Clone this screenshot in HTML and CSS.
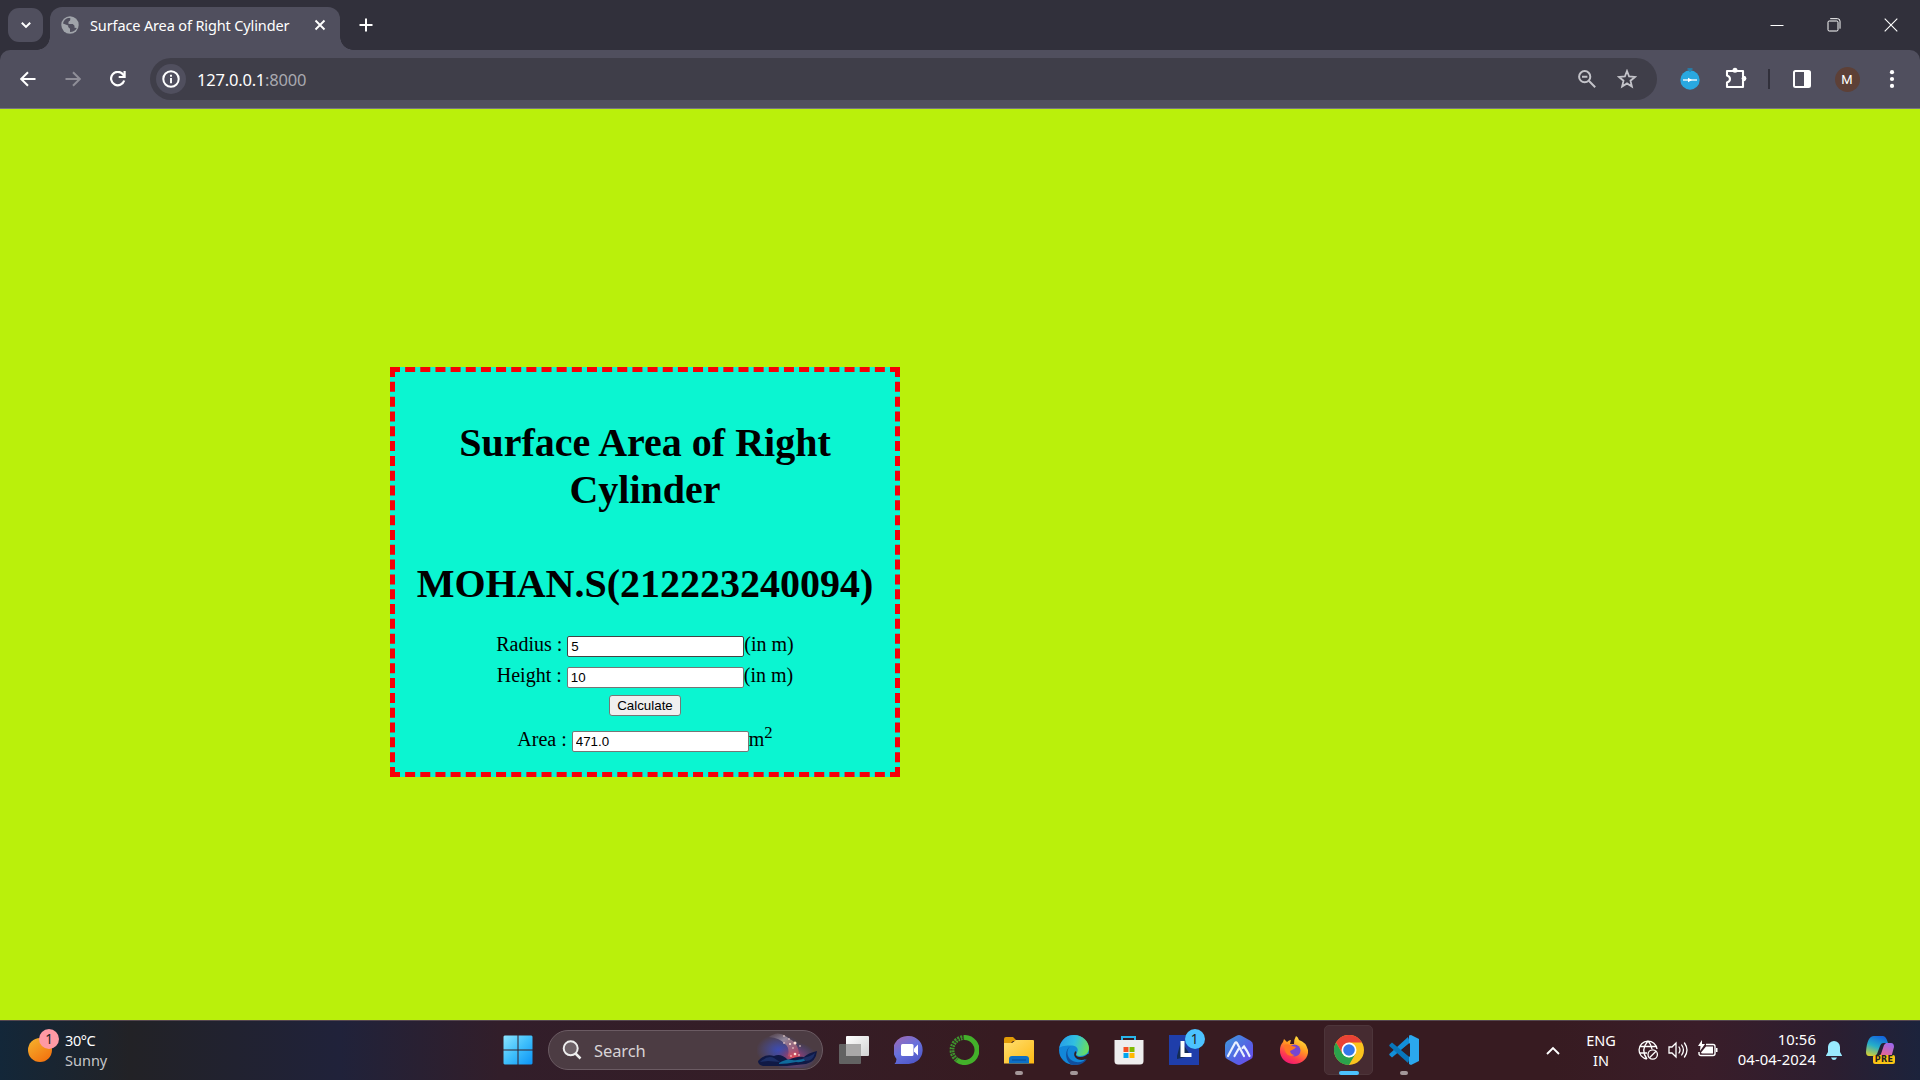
FILE: index.html
```html
<!DOCTYPE html>
<html lang="en">
<head>
<meta charset="utf-8">
<title>Surface Area of Right Cylinder</title>
<link rel="stylesheet" href="styles.css">
</head>
<body>
<div class="screen">
  <header class="tabstrip">
    <button class="tab-search" aria-label="Search tabs"><svg width="12" height="12" viewBox="0 0 12 12"><path d="M1.8 3.7 6 7.9l4.200-4.200" fill="none" stroke="#fff" stroke-width="2"/></svg></button>
    <div class="tab">
      <svg class="favicon" width="18" height="18" viewBox="0 0 18 18"><circle cx="9" cy="9" r="8.700" fill="#a0a4aa"/><path d="M2 7.500C2.300 5 4.500 2.500 7 2L9.500 2v2.200L7.500 6v2h4.300l1.700 1.700v2.100l2.300.2C14.500 14.500 12 16 9 16v-3.200L7.200 11V9.400z" fill="#504f5e"/><path d="M7.500 6 9.500 4.200V2l3 1 2.500 3-3.200 1.500H9z" fill="#a0a4aa"/></svg>
      <span class="tab-title">Surface Area of Right Cylinder</span>
      <svg class="tab-close" width="12" height="12" viewBox="0 0 12 12"><path d="m1.500 1.500 9 9m0-9-9 9" stroke="#fff" stroke-width="1.900"/></svg>
    </div>
    <svg class="new-tab" width="14" height="14" viewBox="0 0 14 14"><path d="M7 .5v13M.5 7h13" stroke="#fff" stroke-width="2"/></svg>
    <div class="window-controls">
      <svg width="14" height="14" viewBox="0 0 14 14"><path d="M.5 7.500h13" stroke="#fff"/></svg>
      <svg width="14" height="14" viewBox="0 0 14 14"><rect x="1" y="3" width="10" height="10" rx="1.200" fill="none" stroke="#fff"/><path d="M3.200.7h7.300a2.500 2.500 0 0 1 2.500 2.500v7.500" fill="none" stroke="#fff"/></svg>
      <svg width="14" height="14" viewBox="0 0 14 14"><path d="m.7.7 12.600 12.600m0-12.600L.7 13.300" stroke="#fff" stroke-width="1.100"/></svg>
    </div>
  </header>
  <div class="toolbar-back">
  <nav class="toolbar">
    <div class="nav-icons">
      <svg width="16" height="16" viewBox="0 0 16 16"><path d="M15.500 8H2M8 1.200 1.200 8 8 14.800" fill="none" stroke="#fff" stroke-width="2"/></svg>
      <svg width="16" height="16" viewBox="0 0 16 16"><path d="M.5 8H14M8 1.200 14.800 8 8 14.800" fill="none" stroke="#8f8e98" stroke-width="2"/></svg>
      <svg width="16" height="16" viewBox="0 0 16 16"><path d="M14.200 9.500A6.700 6.700 0 1 1 12.900 3.200L14.300 5" fill="none" stroke="#fff" stroke-width="2.200"/><path d="M15.700 0v7h-7V5h4.800V0z" fill="#fff"/></svg>
    </div>
    <div class="omnibox">
      <span class="site-info"><svg width="18" height="18" viewBox="0 0 18 18"><circle cx="9" cy="9" r="7.700" fill="none" stroke="#fff" stroke-width="2"/><path d="M9 8v5.200M9 4.800v2" stroke="#fff" stroke-width="1.900"/></svg></span>
      <span class="url">127.0.0.1<span class="port">:8000</span></span>
      <svg class="zoom-icon" width="18" height="18" viewBox="0 0 18 18"><circle cx="6.700" cy="6.700" r="5.600" fill="none" stroke="#c3c3c9" stroke-width="2"/><path d="m10.800 10.800 6.400 6.400M4 6.700h5.400" stroke="#c3c3c9" stroke-width="2"/></svg>
      <svg class="star-icon" width="20" height="20" viewBox="0 0 20 20"><path d="m10 2 2.100 5.500 5.900.4-4.500 3.800 1.400 5.800L10 14.400l-4.900 3.100 1.400-5.800L2 7.900l5.900-.4z" fill="none" stroke="#c3c3c9" stroke-width="1.800"/></svg>
    </div>
    <div class="ext timer"><svg width="20" height="22" viewBox="0 0 20 22"><circle cx="10" cy="12" r="9.700" fill="#29a8e0"/><path d="M7.500 1h5M10 1v3" stroke="#1e86b8" stroke-width="1.500"/><path d="M3 12h14" stroke="#fff" stroke-width="1.300"/><path d="m8 9.800 4 2.200-4 2.200z" fill="#fff"/></svg></div>
    <div class="ext puzzle"><svg width="22" height="22" viewBox="0 0 22 22"><path d="M2 4h16v5.200a2.300 2.300 0 0 1 0 4.400V20H2v-4.500q3-1 3-3.500T2 8.500z" fill="none" stroke="#fff" stroke-width="2.100" stroke-linejoin="round"/><circle cx="10" cy="3.200" r="2.500" fill="#fff"/><circle cx="19" cy="11.500" r="2.400" fill="#fff"/></svg></div>
    <div class="ext divider"><i></i></div>
    <div class="ext panel"><svg width="18" height="18" viewBox="0 0 18 18"><rect x="1" y="1" width="16" height="16" rx="1.500" fill="none" stroke="#fff" stroke-width="2"/><path d="M11 1h6v16h-6z" fill="#fff"/></svg></div>
    <div class="ext profile"><span class="avatar">M</span></div>
    <div class="ext menu"><svg width="6" height="18" viewBox="0 0 6 18"><g fill="#fff"><circle cx="3" cy="2.200" r="2.100"/><circle cx="3" cy="9" r="2.100"/><circle cx="3" cy="15.900" r="2.100"/></g></svg></div>
  </nav>
  </div>
  <main class="page">
    <form class="box">
      <h1>Surface Area of Right Cylinder</h1>
      <h1 class="author">MOHAN.S(212223240094)</h1>
      <div class="row">Radius : <input type="text" class="radius" value="5">(in m)</div>
      <div class="row">Height : <input type="text" value="10">(in m)</div>
      <div class="action"><input type="button" value="Calculate"></div>
      <div class="row area">Area : <input type="text" value="471.0">m<sup>2</sup></div>
    </form>
  </main>
  <footer class="taskbar">
    <div class="weather">
      <span class="sun"><b class="alert">1</b></span>
      <div class="weather-text"><div>30°C</div><div class="cond">Sunny</div></div>
    </div>
    <div class="apps">
      <div class="app"><svg width="30" height="30" viewBox="0 0 30 30"><defs><linearGradient id="win" x1="0" y1="0" x2="1" y2="1"><stop offset="0" stop-color="#8ce4ff"/><stop offset=".5" stop-color="#3fbffb"/><stop offset="1" stop-color="#0c93f5"/></linearGradient></defs><path d="M1.500.5h13v14H.5v-13zM15.500.5h13l1 1v13h-14zM.5 15.500h14v14h-13l-1-1zM15.500 15.500h14v13l-1 1h-13z" fill="url(#win)"/></svg></div>
      <div class="search">
        <svg width="20" height="20" viewBox="0 0 20 20"><circle cx="8.700" cy="8.300" r="7" fill="#6d6167" stroke="#eee" stroke-width="2"/><path d="m13.500 13.500 5 5" stroke="#eee" stroke-width="2.500"/></svg>
        <span>Search</span>
        <svg class="art" width="62" height="36" viewBox="0 0 62 36"><defs><radialGradient id="glow"><stop offset="0" stop-color="#f0484f"/><stop offset=".38" stop-color="#824077" stop-opacity=".85"/><stop offset="1" stop-color="#394ba8" stop-opacity="0"/></radialGradient><radialGradient id="blu"><stop offset="0" stop-color="#394cb9"/><stop offset="1" stop-color="#4b54aa" stop-opacity="0"/></radialGradient><linearGradient id="smk" x1="0" y1="0" x2=".7" y2="1"><stop offset="0" stop-color="#695a68" stop-opacity=".3"/><stop offset=".4" stop-color="#a298a8"/><stop offset="1" stop-color="#d0505f" stop-opacity=".7"/></linearGradient></defs><ellipse cx="22" cy="18" rx="23" ry="16" fill="url(#blu)"/><ellipse cx="37" cy="25" rx="22" ry="15" fill="url(#glow)"/><path d="M12 5Q19-1 27 3q4 3 9 6 5 4 6 12l-5 5-6-2q2-8-3-12Q23 6 12 5" fill="url(#smk)" opacity=".8"/><path d="M1 29q7-8 16-5 7-3 14 4 9-4 16-3 4-4 13-6-1 11-11 13L30 34H6q-5-1-5-5" fill="#101945"/><path d="M22 31q8-5 13-3 9 1 17-3-4 6-13 5-9 2-17 2z" fill="#116b9b"/><path d="M3 30q8-7 14-4l6 4-12-1zM45 26q8-1 13-5-2 8-9 8z" fill="#1d2f66"/><g fill="#ffe1d5"><circle cx="27" cy="4" r=".8"/><circle cx="32" cy="7" r=".8"/><circle cx="27" cy="11" r=".8"/><circle cx="33" cy="12" r="1"/><circle cx="38" cy="11" r="1.500"/><circle cx="43" cy="14" r=".8"/><circle cx="36" cy="16" r=".8"/><circle cx="38" cy="22" r="1.300"/><circle cx="42" cy="23" r=".8"/><circle cx="34" cy="24" r=".8"/></g></svg>
      </div>
      <div class="app"><svg width="30" height="30" viewBox="0 0 30 30"><defs><linearGradient id="tv" x1="0" y1="0" x2="1" y2="1"><stop offset="0" stop-color="#fff"/><stop offset="1" stop-color="#d2d2d2"/></linearGradient></defs><rect x="7" y="1" width="23" height="20" rx="1" fill="url(#tv)"/><rect x="0" y="9" width="22" height="20" rx="1" fill="#626262"/><path d="M7 9h15v12H7z" fill="#a9a8a8"/></svg></div>
      <div class="app"><svg width="30" height="30" viewBox="0 0 30 30"><defs><linearGradient id="chat" x1="0" y1="0" x2=".6" y2="1"><stop offset="0" stop-color="#a568ad"/><stop offset=".55" stop-color="#6871dd"/><stop offset="1" stop-color="#5059c9"/></linearGradient></defs><path d="M15 1a14 14 0 1 1-2 27.900H.5q2-2 2-5A14 14 0 0 1 15 1" fill="url(#chat)"/><rect x="7" y="9" width="12.500" height="12" rx="1.500" fill="#fff"/><path d="m20 13.500 4-4v11l-4-4z" fill="#fff"/></svg></div>
      <div class="app"><svg width="30" height="30" viewBox="0 0 30 30"><path d="M15 2.500A12.500 12.500 0 1 1 8 25" fill="none" stroke="#43b02a" stroke-width="5"/><path d="M8 25A12.500 12.500 0 0 1 15 2.500" fill="none" stroke="#3f942e" stroke-width="4.800" stroke-dasharray="2 1"/><path d="M7 24A11.500 11.500 0 0 1 14 3.500" fill="none" stroke="#321f22" stroke-width="1" stroke-dasharray="1 1.500"/></svg></div>
      <div class="app running"><svg width="30" height="30" viewBox="0 0 30 30"><defs><linearGradient id="fold" x1="0" y1="0" x2="1" y2="1"><stop offset="0" stop-color="#ffdf70"/><stop offset="1" stop-color="#fdb913"/></linearGradient></defs><path d="M0 4q0-2 2-2h7l4 4h-4l-3 3H0z" fill="#e19b06"/><path d="M0 8h8l4-3h17q1 0 1 1v22.500H0z" fill="url(#fold)"/><path d="M5 28.500V24q0-3 3-3h14q3 0 3 3v4.500z" fill="#0d70c6"/><path d="M8 25h14" stroke="#064a93"/></svg></div>
      <div class="app running"><svg width="30" height="30" viewBox="0 0 30 30"><defs><linearGradient id="edg" x1="0" y1=".3" x2="1" y2=".5"><stop offset="0" stop-color="#279de8"/><stop offset=".5" stop-color="#31bfe1"/><stop offset="1" stop-color="#69df5b"/></linearGradient></defs><circle cx="15" cy="15" r="15" fill="#1287d9"/><path d="M.3 13C2 4.500 8 0 15 0c9 0 15 7 15 13 0 5-4 8-9 8-3 0-4.500-1.500-3-3.500 2-3 0-7-5-7C7 10.500 2 11 .3 13" fill="url(#edg)"/><path d="M12 11c-5 3-5 11 1 14.500 5 3 11 1.500 15-1.500-4 6-11 7-16 5.500C6 26 5 14 12 11" fill="#114f9e"/><path d="M17.500 18c-1.500 2 0 4 4 4 3 0 6-1.500 7-3l1.500 0-1 4.500-2 .5c-4 2-9 1-11-2-1.500-2-1-5 1-6z" fill="#351d22"/></svg></div>
      <div class="app"><svg width="30" height="30" viewBox="0 0 30 30"><path d="M8 6V2h13v4" fill="none" stroke="#28b5ea" stroke-width="2"/><path d="M.5 5h29v21q0 3.500-3.500 3.500H4Q.5 29.500.5 26z" fill="#eee"/><path d="M9.500 12h5v5h-5z" fill="#f25022"/><path d="M15.500 12h5v5h-5z" fill="#7fba00"/><path d="M9.500 18h5v5h-5z" fill="#00a4ef"/><path d="M15.500 18h5v5h-5z" fill="#ffb900"/></svg></div>
      <div class="app"><span class="l-app"><svg width="30" height="30" viewBox="0 0 30 30"><path d="M0 0h30v30H0z" fill="#1f3eaa"/><path d="m12 6-4 15v3l14-3z" fill="#142c55"/><path d="M11.500 6h4v12h7v4h-11z" fill="#fff"/></svg><b class="count">1</b></span></div>
      <div class="app"><svg width="30" height="30" viewBox="0 0 30 30"><defs><linearGradient id="hex" x1="0" y1="0" x2="1" y2="1"><stop offset="0" stop-color="#3e9ddc"/><stop offset=".6" stop-color="#5561e4"/><stop offset="1" stop-color="#6e49ed"/></linearGradient></defs><path d="M12.500.7q2.500-1.400 5 0l9 5Q29 7 29 10v10q0 3-2.500 4.300l-9 5q-2.500 1.400-5 0l-9-5Q1 23 1 20V10q0-3 2.500-4.300z" fill="url(#hex)"/><path d="M4 21 11 8q1-1.500 2 0l7 13M10.500 21l4-7M18.500 13l1.500-1.500q3 4 5.500 9.500" fill="none" stroke="#eaf1ff" stroke-width="2.200" stroke-linecap="round"/></svg></div>
      <div class="app"><svg width="30" height="30" viewBox="0 0 30 30"><defs><linearGradient id="ff" x1=".8" y1="0" x2=".3" y2="1"><stop offset="0" stop-color="#ffec43"/><stop offset=".4" stop-color="#ff9d20"/><stop offset=".75" stop-color="#ff3d4e"/><stop offset="1" stop-color="#ef1674"/></linearGradient></defs><path d="M17 1q2 1 3 4 7 2 9 10c1 8-6 14-14 14S.5 23 1 15q0-5 3-8l1-3 3 3q2-2 4-2l-1 4h4q0-5 2-8" fill="url(#ff)"/><circle cx="15.500" cy="15.500" r="6" fill="#7746d2"/><path d="M5 10q4-2 8 1l4 1q-1 2-4 3l-2 1q1 4 5 4-7 3-10-4z" fill="#ff7722"/></svg></div>
      <div class="app running active"><svg width="30" height="30" viewBox="0 0 30 30"><circle cx="15" cy="15" r="15" fill="#fbc31e"/><path d="M2 7.500A15 15 0 0 1 28 7.500H15l-6.500 11.200z" fill="#e94235"/><path d="M2 7.500 8.500 18.700 15 22.500l6.500-3.800L15 30A15 15 0 0 1 2 7.500" fill="#2ba24c"/><circle cx="15" cy="15" r="7.500" fill="#fff"/><circle cx="15" cy="15" r="5.800" fill="#3478ea"/></svg></div>
      <div class="app running"><svg width="30" height="30" viewBox="0 0 30 30"><path d="m21 7.500-18 15-2.700-2.500V19L19 2z" fill="#138fd9"/><path d="m21 22.500-18-15L.3 10v1L19 28z" fill="#0876bb"/><path d="M20 .5 22 0l8 4v22l-8 4-2-1z" fill="#2ba8ee"/><path d="m21 8-8.500 7 8.500 7z" fill="#351d22"/></svg></div>
    </div>
    <div class="tray">
      <svg class="chev" width="14" height="9" viewBox="0 0 14 9"><path d="m1 8 6-6 6 6" fill="none" stroke="#fff" stroke-width="1.900"/></svg>
      <div class="lang">ENG<br>IN</div>
      <div class="status">
        <svg width="20" height="20" viewBox="0 0 20 20"><g fill="none" stroke="#fff" stroke-width="1.300"><path d="M9 19A9 9 0 1 1 19 9M1.500 6.500h17M1.500 13H9M9 19Q2 10 10 1q3 3 4 8"/><circle cx="14.700" cy="14.500" r="4.700"/><path d="m11.500 17.800 6.500-6.600"/></g></svg>
        <svg width="20" height="20" viewBox="0 0 20 20"><g fill="none" stroke="#fff" stroke-width="1.300" stroke-linecap="round"><path d="M1 7h3l4-4v14l-4-4H1zM11 7q2 3 0 6M13.700 5q3.500 5 0 10M16.500 3q5 7 0 14"/></g></svg>
        <svg width="20" height="20" viewBox="0 0 20 20"><path d="M8 4.500h7q2 0 2 2v7q0 2-2 2H3q-2 0-2-2V12" fill="none" stroke="#fff" stroke-width="1.400"/><path d="M8 6.500h7v7H4.500q-1.500 0-1.500-1zM18 8h1.500v4H18zM4 0v4h3L2 11l.5-5H0z" fill="#fff"/></svg>
      </div>
      <div class="clock">10:56<br>04-04-2024</div>
      <svg class="bell" width="16" height="19" viewBox="0 0 16 19"><path d="M8 0a6 6 0 0 1 6 6v5l2 3.500V15H0v-.5L2 11V6a6 6 0 0 1 6-6M5 16.500h6q-1 2.500-3 2.500t-3-2.500" fill="#99ebff"/></svg>
      <div class="copilot"><svg width="30" height="22" viewBox="0 0 30 22"><defs><linearGradient id="ca" x1=".6" y1="0" x2=".2" y2="1"><stop offset="0" stop-color="#1468dd"/><stop offset=".5" stop-color="#25aec9"/><stop offset="1" stop-color="#d2cf35"/></linearGradient><linearGradient id="cb" x1=".8" y1="0" x2=".3" y2="1"><stop offset="0" stop-color="#9a68ef"/><stop offset="1" stop-color="#f76483"/></linearGradient></defs><path d="M8 0h9q3 0 5 7h-5q-2 0-3 3l-3 8q-1 2-4 2H3q-3 0-3-4Q1 0 8 0" fill="url(#ca)"/><path d="M20 7h5q3 0 3 4l-3 11H12l3-4 3-9z" fill="url(#cb)"/></svg><b class="pre">PRE</b></div>
    </div>
  </footer>
</div>
</body>
</html>
```
FILE: styles.css
```css
* { box-sizing: border-box; }
body { margin: 0; overflow: hidden; }
svg { display: block; flex: none; }
.screen { width: 1920px; height: 1080px; display: flex; flex-direction: column; font-family: "Noto Sans", sans-serif; color: #fff; }

/* Browser tab strip */
.tabstrip { height: 50px; background: #31303b; display: flex; align-items: flex-start; padding-left: 8px; }
.tab-search { width: 35px; height: 34px; margin: 8px 7px 0 0; padding: 0; border: 0; border-radius: 11px; background: #504f5e; display: flex; align-items: center; justify-content: center; }
.tab { position: relative; width: 290px; height: 43px; margin-top: 7px; padding: 0 14px 7px 11px; background: #504f5e; border-radius: 12px 12px 0 0; display: flex; align-items: center; }
.tab::before, .tab::after { content: ""; position: absolute; bottom: 0; width: 13px; height: 13px; }
.tab::before { left: -13px; background: radial-gradient(circle at 0 0, transparent 12.5px, #504f5e 13px); }
.tab::after { right: -13px; background: radial-gradient(circle at 100% 0, transparent 12.5px, #504f5e 13px); }
.tab-title { margin-left: 11px; font-size: 14.5px; letter-spacing: -.13px; white-space: nowrap; }
.tab-close { margin-left: auto; }
.new-tab { margin: 18px 0 0 19px; }
.window-controls { margin: 17.500px 22px 0 auto; display: flex; gap: 43px; }

/* Toolbar */
.toolbar-back { background: #31303b; height: 59px; }
.toolbar { height: 59px; background: #504f5e; border-bottom: 1px solid #77767f; border-radius: 10px 10px 0 0; display: flex; align-items: center; }
.nav-icons { width: 150px; padding-left: 20px; display: flex; gap: 29px; }
.omnibox { width: 1507px; height: 42px; border-radius: 21px; background: #3f3e49; display: flex; align-items: center; padding: 0 20px 0 6px; }
.site-info { width: 30px; height: 30px; border-radius: 50%; background: #504f5e; display: flex; align-items: center; justify-content: center; }
.url { margin-left: 11px; font-size: 16.500px; letter-spacing: -.2px; }
.port { color: #a9a9b0; }
.zoom-icon { margin-left: auto; }
.star-icon { margin-left: 21px; }
.ext { display: flex; justify-content: center; align-items: center; }
.timer { width: 66px; }
.puzzle { width: 26px; padding-bottom: 2px; }
.divider { width: 39px; }
.divider i { width: 2px; height: 20px; background: #31303b; }
.panel { width: 28px; }
.profile { width: 62px; }
.avatar { width: 25px; height: 25px; border-radius: 50%; background: #5d4037; font: 13px/25px Roboto, sans-serif; text-align: center; }
.menu { width: 28px; }

/* Calculator page */
.page { height: 911px; background: #baf00b; padding: 258px 0 0 390px; font-family: "Liberation Serif", serif; color: #000; }
.box { width: 510px; height: 410px; border: 5px dashed #f60008; background: #0bf5d1; padding: 20px; font-size: 20px; text-align: center; }
.box h1 { margin: 27px 0 0; font-size: 40px; line-height: 47px; }
.box .author { margin: 47px -20px 26px; }
.row { height: 31px; line-height: 23px; white-space: nowrap; }
.row input { width: 177px; height: 21px; padding: 1px 3px; border: 1px solid #767676; border-radius: 2px; background: #fff; font: 13.333px "Liberation Sans", sans-serif; color: #000; }
.row .radius { border-color: #444; }
.action { height: 33px; display: flex; justify-content: center; align-items: flex-start; }
.action input { width: 72px; height: 21px; padding: 0; border: 1px solid #767676; border-radius: 3px; background: #efefef; font: 13.333px "Liberation Sans", sans-serif; color: #000; }
.area sup { font-size: 16.667px; line-height: 0; }

/* Taskbar */
.taskbar { height: 60px; border-top: 1px solid #55474f; background: linear-gradient(90deg, #132739 0, #222226 130px, #20223a 340px, #321e2a 500px, #351d26 800px, #371b21 1000px, #371b21 1550px, #3a1d29 1700px, #2c1e30 1830px, #1c233c 1920px); display: flex; align-items: center; padding-bottom: 1px; }
.weather { width: 490px; padding-left: 28px; display: flex; align-items: center; }
.sun { position: relative; width: 24px; height: 24px; border-radius: 50%; background: linear-gradient(145deg, #f5b52e, #f26a0b); margin-top: -1px; }
.alert, .count { position: absolute; border-radius: 50%; width: 20px; height: 20px; color: #222; font-size: 13.500px; line-height: 20px; text-align: center; font-weight: 400; }
.alert { left: 11px; top: -9px; background: #fe99a4; }
.weather-text { margin: -1px 0 0 13px; font-size: 14.500px; line-height: 20px; letter-spacing: -.4px; }
.cond { color: #c5c7ca; letter-spacing: 0; }
.apps { display: flex; height: 59px; align-items: center; }
.app { position: relative; width: 55px; height: 59px; padding-bottom: 1px; display: flex; align-items: center; justify-content: center; }
.app > * { position: relative; z-index: 1; }
.search { width: 275px; height: 40px; margin: 0 3px; padding: 0 3px 0 13px; border: 1px solid #6b5b63; border-radius: 20px; background: #4c3c43; display: flex; align-items: center; color: #d8d3d6; font-size: 16.500px; }
.search span { margin-left: 12px; letter-spacing: -.1px; }
.search .art { margin-left: auto; }
.running::after { content: ""; position: absolute; left: 24px; top: 50px; width: 8px; height: 4px; border-radius: 2px; background: #a49799; }
.active::before { content: ""; position: absolute; inset: 4px 3px 5px; border: 1px solid #4d353a; border-radius: 5px; background: #462b31; }
.active::after { left: 18px; width: 20px; background: #4cc2ff; }
.l-app .count { left: 16px; top: -6px; background: #4cc2ff; }
.tray { margin-left: auto; display: flex; align-items: center; padding-right: 24px; font-size: 14.500px; line-height: 20px; }
.lang { width: 40px; margin: -1px 0 0 21px; text-align: center; }
.status { display: flex; gap: 10px; margin-left: 17px; }
.clock { width: 98px; margin-top: -2px; text-align: right; font-size: 14.800px; letter-spacing: .1px; }
.bell { margin-left: 10px; }
.copilot { position: relative; width: 30px; height: 28px; margin-left: 24px; }
.pre { position: absolute; left: 7px; top: 19px; width: 22px; height: 9px; border-radius: 2px; background: #fbc414; color: #222; font: bold 8px/9px "DejaVu Sans", sans-serif; text-align: center; letter-spacing: .3px; }
```
